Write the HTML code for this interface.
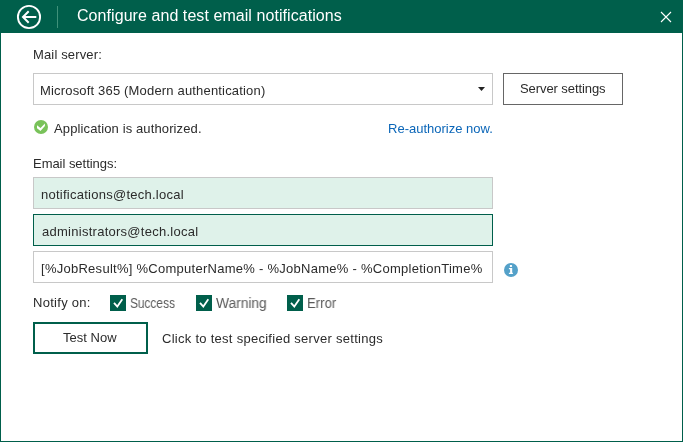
<!DOCTYPE html>
<html>
<head>
<meta charset="utf-8">
<style>
html,body{margin:0;padding:0;}
body{width:683px;height:442px;overflow:hidden;background:#fff;font-family:"Liberation Sans",sans-serif;color:#1e1e1e;position:relative;}
.abs{position:absolute;}
#frame{left:0;top:0;width:683px;height:442px;box-sizing:border-box;border-left:1px solid #005f4b;border-right:1px solid #005f4b;border-bottom:1px solid #005f4b;}
#hdr{left:0;top:0;width:683px;height:33px;background:#005f4b;}
#sep{left:57px;top:6px;width:1px;height:22px;background:#40917a;}
.t{font-size:13px;line-height:16px;white-space:nowrap;will-change:transform;}
.box{box-sizing:border-box;border:1px solid #c8c8c8;background:#fff;}
.green{background:#dff2ea;}
.focus{border:1px solid #005f4b;}
.cb{width:16px;height:16px;}
</style>
</head>
<body>
<div id="hdr" class="abs"></div>
<div id="frame" class="abs"></div>
<svg class="abs" style="left:16px;top:4px" width="26" height="26" viewBox="0 0 26 26"><circle cx="13" cy="13" r="11.1" fill="none" stroke="#fff" stroke-width="1.9"/><path d="M20.3 13H7.4M12.7 7.3L7 13l5.7 5.7" fill="none" stroke="#fff" stroke-width="2"/></svg>
<div id="sep" class="abs"></div>
<div class="abs t" id="title" style="left:77px;top:8px;font-size:16px;color:#fff;letter-spacing:0.065px">Configure and test email notifications</div>
<svg class="abs" style="left:660px;top:11px" width="12" height="12" viewBox="0 0 12 12"><path d="M1 1L11 11M11 1L1 11" stroke="#fff" stroke-width="1.1" fill="none"/></svg>

<div class="abs t" id="mail" style="left:33px;top:47px;font-size:13px;color:#2b2b2b;letter-spacing:0.15px">Mail server:</div>
<div class="abs box" style="left:33px;top:73px;width:460px;height:32px"></div>
<div class="abs t" id="ms365" style="left:40px;top:83px;font-size:13px;color:#2b2b2b;letter-spacing:0.174px">Microsoft 365 (Modern authentication)</div>
<svg class="abs" style="left:478px;top:87px" width="7" height="4" viewBox="0 0 7 4"><path d="M0 0H7L3.5 4Z" fill="#222"/></svg>
<div class="abs box" style="left:503px;top:73px;width:120px;height:32px;border-color:#666"></div>
<div class="abs t" id="srv" style="left:520px;top:81px;font-size:13px;color:#2b2b2b;letter-spacing:-0.083px">Server settings</div>

<svg class="abs" style="left:33px;top:119px" width="16" height="16" viewBox="0 0 16 16"><circle cx="8" cy="8" r="7" fill="#79c25a"/><path d="M4 6.2L7.5 9L11.9 4.5V7L7.5 11.9L4 9.2Z" fill="#fff"/></svg>
<div class="abs t" id="app" style="left:54px;top:121px;font-size:13px;color:#2b2b2b;letter-spacing:0.12px">Application is authorized.</div><div class="abs t" id="reauth" style="left:388px;top:121px;font-size:13px;color:#0b66b8;letter-spacing:0.005px">Re-authorize now.</div>

<div class="abs t" id="email" style="left:33px;top:156px;font-size:13px;color:#2b2b2b;letter-spacing:-0.037px">Email settings:</div>
<div class="abs box green" style="left:33px;top:177px;width:460px;height:32px"></div>
<div class="abs t" id="notif" style="left:41px;top:187px;font-size:13px;color:#2b2b2b;letter-spacing:0.254px">notifications@tech.local</div>
<div class="abs box green focus" style="left:33px;top:214px;width:460px;height:32px"></div>
<div class="abs t" id="admin" style="left:42px;top:224px;font-size:13px;color:#2b2b2b;letter-spacing:0.266px">administrators@tech.local</div>
<div class="abs box" style="left:33px;top:251px;width:460px;height:32px"></div>
<div class="abs t" id="subj" style="left:41px;top:261px;font-size:13px;color:#2b2b2b;letter-spacing:0.267px">[%JobResult%] %ComputerName% - %JobName% - %CompletionTime%</div>
<svg class="abs" style="left:503px;top:262px" width="16" height="16" viewBox="0 0 16 16"><circle cx="8" cy="8" r="7" fill="#54a1c9"/><path d="M5.9 6.1h3.3v4.7h.7v1.2H5.9v-1.2h1.2V7.2H5.9z" fill="#fff"/><rect x="6.8" y="3.1" width="2.3" height="1.8" rx="0.6" fill="#fff"/></svg>

<div class="abs t" id="notify" style="left:33px;top:295px;font-size:13px;color:#2b2b2b;letter-spacing:0.284px">Notify on:</div>
<svg class="abs cb" style="left:110px;top:295px" viewBox="0 0 16 16"><rect width="16" height="16" fill="#005f4b"/><path d="M4 7.8L7.3 11.6L12.3 4.3" fill="none" stroke="#fff" stroke-width="1.8"/></svg>
<div class="abs t" id="success" style="left:130px;top:295px;font-size:14px;color:#5a5a5a;letter-spacing:0px;transform:scaleX(0.85);transform-origin:0 0">Success</div>
<svg class="abs cb" style="left:196px;top:295px" viewBox="0 0 16 16"><rect width="16" height="16" fill="#005f4b"/><path d="M4 7.8L7.3 11.6L12.3 4.3" fill="none" stroke="#fff" stroke-width="1.8"/></svg>
<div class="abs t" id="warning" style="left:216px;top:295px;font-size:14px;color:#5a5a5a;letter-spacing:0px;transform:scaleX(0.983);transform-origin:0 0">Warning</div>
<svg class="abs cb" style="left:287px;top:295px" viewBox="0 0 16 16"><rect width="16" height="16" fill="#005f4b"/><path d="M4 7.8L7.3 11.6L12.3 4.3" fill="none" stroke="#fff" stroke-width="1.8"/></svg>
<div class="abs t" id="error" style="left:307px;top:295px;font-size:14px;color:#5a5a5a;letter-spacing:0px;transform:scaleX(0.94);transform-origin:0 0">Error</div>

<div class="abs box" style="left:33px;top:322px;width:115px;height:32px;border:2px solid #005f4b"></div>
<div class="abs t" id="testnow" style="left:63px;top:330px;font-size:13px;color:#2b2b2b;letter-spacing:0.029px">Test Now</div><div class="abs t" id="click" style="left:162px;top:331px;font-size:13px;color:#2b2b2b;letter-spacing:0.275px">Click to test specified server settings</div>
</body>
</html>
